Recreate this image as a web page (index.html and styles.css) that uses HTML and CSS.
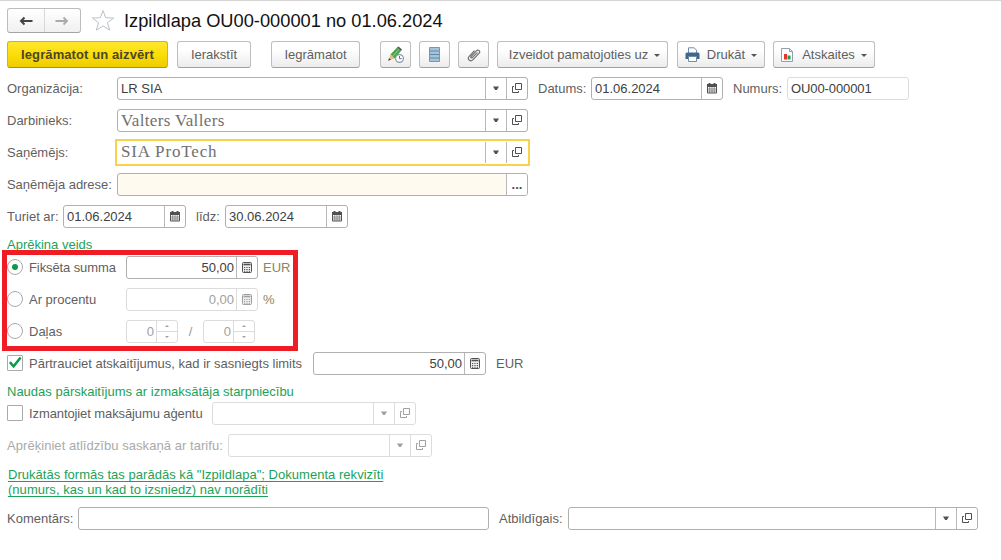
FILE: index.html
```
<!DOCTYPE html>
<html lang="lv">
<head>
    <meta charset="UTF-8">
    <meta name="viewport" content="width=device-width, initial-scale=1.0">
    <title>Izpildlapa OU00-000001</title>
    <link rel="stylesheet" href="styles.css">
</head>
<body>

<!-- Shared icons -->
<svg class="sprite" width="0" height="0">
    <symbol id="i-down" viewBox="0 0 20 21">
        <path d="M7 8.500h6l-2.200 3.500h-1.600z" fill="currentColor"/>
    </symbol>
    <symbol id="i-open" viewBox="0 0 20 21">
        <path d="M7 8.500H5.500v6h6v-1.500M8.500 5.500h6v6h-6z" fill="none" stroke="currentColor" stroke-width="1"/>
    </symbol>
    <symbol id="i-date" viewBox="0 0 20 21">
        <path d="M5.500 7h9v8h-9z" fill="#fff" stroke="currentColor"/>
        <path d="M5 6h10v3H5zM6.500 5h2v2h-2zM11.500 5h2v2h-2z" fill="currentColor"/>
        <path d="M5.500 11h9M5.500 13h9M7.800 9v6M10 9v6M12.200 9v6" stroke="currentColor" stroke-width=".6"/>
    </symbol>
    <symbol id="i-calc" viewBox="0 0 20 21">
        <rect x="5.500" y="5.500" width="9" height="10" rx="1" fill="#eee" stroke="currentColor"/>
        <path d="M6.500 7.500h7" stroke="currentColor" stroke-width="1.600"/>
        <path d="M7 10.500h6.500M7 12.500h6.500M7 14.300h6.500" stroke="currentColor" stroke-width="1" stroke-dasharray="1.200 1.200"/>
    </symbol>
</svg>

<div class="form">
    <div class="header">
        <div class="nav">
            <span><svg width="14" height="10" viewBox="0 0 14 10"><path d="M13.500 5H2M5.500 1.500 2 5l3.500 3.500" fill="none" stroke="#444" stroke-width="2"/></svg></span>
            <span><svg width="14" height="10" viewBox="0 0 14 10"><path d="M.5 5H12M8.500 1.500 12 5 8.500 8.500" fill="none" stroke="#aaa" stroke-width="1.800"/></svg></span>
        </div>
        <svg class="star" width="24" height="23" viewBox="0 0 24 23"><path d="M12 1.500l2.700 7.200 8 .3-6.300 4.700 2.300 7.500-6.700-4.300-6.700 4.300 2.300-7.500L1.300 9l8-.3z" fill="#fff" stroke="#bcc2c8"/></svg>
        <h1>Izpildlapa OU00-000001 no 01.06.2024</h1>
    </div>

    <div class="toolbar">
        <button class="btn primary">Iegrāmatot un aizvērt</button>
        <button class="btn save">Ierakstīt</button>
        <button class="btn post">Iegrāmatot</button>
        <button class="btn icon">
            <svg width="18" height="18" viewBox="0 0 18 18">
                <path d="M3.500 8.500 10 1.500l4 3.500-6.500 7.500z" fill="#43a548"/>
                <path d="M5.500 10.500 12 3.300" stroke="#7cc576" stroke-width="1.200"/>
                <path d="M10 1.500l1.500-1 3.500 3-1 1.500z" fill="#555"/>
                <path d="M3.500 8.500l4 4-6 2z" fill="#e6b98a"/>
                <path d="M2.200 12.300l1.700 1.500-2.900 1z" fill="#333"/>
                <circle cx="12.500" cy="12.500" r="3.900" fill="#fff" stroke="#8397a8" stroke-width="1.200"/>
                <path d="M12.500 10v2.700h2.200" fill="none" stroke="#60788c"/>
            </svg>
        </button>
        <button class="btn icon">
            <svg width="11" height="15" viewBox="0 0 11 15">
                <path d="M.5.500h10v14H.5z" fill="#a5c4da" stroke="#6f99b6"/>
                <path d="M1 4h9M1 7.500h9M1 11h9" stroke="#5f88a6"/>
            </svg>
        </button>
        <button class="btn icon">
            <svg width="14" height="14" viewBox="0 0 14 14">
                <path d="M10.500 4.300 5.300 9.700c-.9.900-2.100-.3-1.200-1.200l5.200-5.600c2-2 4.600.4 2.700 2.500l-6 6.300c-2.700 2.700-6.300-.6-3.800-3.400l5.300-5.700" fill="none" stroke="#707070" stroke-width="1.200"/>
            </svg>
        </button>
        <button class="btn create">Izveidot pamatojoties uz <i></i></button>
        <button class="btn print">
            <svg width="15" height="15" viewBox="0 0 15 15">
                <path d="M3.500 6V.8h5.700l2.300 2.400V6" fill="#fff" stroke="#6b8dab"/>
                <path d="M2 5.500h11q1.500 0 1.500 1.500v5h-14V7Q.5 5.500 2 5.500z" fill="#41668c"/>
                <path d="M3.500 9.500h8v5h-8z" fill="#fff" stroke="#6b8dab"/>
            </svg>
            Drukāt <i></i>
        </button>
        <button class="btn reports">
            <svg width="12" height="14" viewBox="0 0 12 14">
                <path d="M.5.500h8L11.500 3.500v10H.5z" fill="#fff" stroke="#8fa0ae"/>
                <path d="M8.500.500v3h3" fill="none" stroke="#8fa0ae"/>
                <path d="M3 6h3v5.500H3z" fill="#e5352c"/>
                <path d="M6.500 7.500h3v4h-3z" fill="#1fa049"/>
            </svg>
            Atskaites <i></i>
        </button>
    </div>

    <div class="row">
        <label class="main-label">Organizācija:</label>
        <div class="field wide">
            <span class="value">LR SIA</span>
            <svg><use href="#i-down"/></svg>
            <svg><use href="#i-open"/></svg>
        </div>
        <label class="date-label">Datums:</label>
        <div class="field doc-date">
            <span class="value">01.06.2024</span>
            <svg><use href="#i-date"/></svg>
        </div>
        <label class="number-label">Numurs:</label>
        <div class="field light doc-number"><span class="value">OU00-000001</span></div>
    </div>

    <div class="row">
        <label class="main-label">Darbinieks:</label>
        <div class="field wide">
            <span class="value serif">Valters Vallers</span>
            <svg><use href="#i-down"/></svg>
            <svg><use href="#i-open"/></svg>
        </div>
    </div>

    <div class="row">
        <label class="main-label">Saņēmējs:</label>
        <div class="field wide focused">
            <span class="value serif">SIA ProTech</span>
            <svg><use href="#i-down"/></svg>
            <svg><use href="#i-open"/></svg>
        </div>
    </div>

    <div class="row">
        <label class="main-label address">Saņēmēja adrese:</label>
        <div class="field wide required">
            <span class="value"></span>
            <b class="more">...</b>
        </div>
    </div>

    <div class="row">
        <label class="from-label">Turiet ar:</label>
        <div class="field period from">
            <span class="value">01.06.2024</span>
            <svg><use href="#i-date"/></svg>
        </div>
        <label class="to-label">līdz:</label>
        <div class="field period">
            <span class="value">30.06.2024</span>
            <svg><use href="#i-date"/></svg>
        </div>
    </div>

    <h2>Aprēķina veids</h2>

    <div class="methods">
        <div class="row">
            <span class="radio checked"></span>
            <label class="method-label fixed">Fiksēta summa</label>
            <div class="field amount">
                <span class="value">50,00</span>
                <svg><use href="#i-calc"/></svg>
            </div>
            <span class="unit">EUR</span>
        </div>
        <div class="row">
            <span class="radio"></span>
            <label class="method-label">Ar procentu</label>
            <div class="field amount light disabled">
                <span class="value">0,00</span>
                <svg><use href="#i-calc"/></svg>
            </div>
            <span class="unit">%</span>
        </div>
        <div class="row">
            <span class="radio"></span>
            <label class="method-label">Daļas</label>
            <div class="field part light disabled">
                <span class="value">0</span>
                <span class="spin"><i></i><i></i></span>
            </div>
            <span class="slash">/</span>
            <div class="field part light disabled">
                <span class="value">0</span>
                <span class="spin"><i></i><i></i></span>
            </div>
        </div>
        <div class="highlight"></div>
    </div>

    <div class="row">
        <span class="checkbox"><svg width="15" height="15" viewBox="0 0 15 15"><path d="M2 6l4 4.500L13.500 1" fill="none" stroke="#0a9a4a" stroke-width="2.600"/></svg></span>
        <label class="limit-label">Pārtrauciet atskaitījumus, kad ir sasniegts limits</label>
        <div class="field limit">
            <span class="value">50,00</span>
            <svg><use href="#i-calc"/></svg>
        </div>
        <span class="currency">EUR</span>
    </div>

    <h2 class="agent-title">Naudas pārskaitījums ar izmaksātāja starpniecību</h2>

    <div class="row">
        <span class="checkbox"></span>
        <label class="agent-label">Izmantojiet maksājumu aģentu</label>
        <div class="field agent light disabled">
            <span class="value"></span>
            <svg><use href="#i-down"/></svg>
            <svg><use href="#i-open"/></svg>
        </div>
    </div>

    <div class="row">
        <label class="tariff-label">Aprēķiniet atlīdzību saskaņā ar tarifu:</label>
        <div class="field agent light disabled">
            <span class="value"></span>
            <svg><use href="#i-down"/></svg>
            <svg><use href="#i-open"/></svg>
        </div>
    </div>

    <a class="print-info">Drukātās formās tas parādās kā "Izpildlapa"; Dokumenta rekvizīti<br>(numurs, kas un kad to izsniedz) nav norādīti</a>

    <div class="row">
        <label class="comment-label">Komentārs:</label>
        <div class="field comment"><span class="value"></span></div>
        <label class="responsible-label">Atbildīgais:</label>
        <div class="field responsible">
            <span class="value"></span>
            <svg><use href="#i-down"/></svg>
            <svg><use href="#i-open"/></svg>
        </div>
    </div>
</div>

</body>
</html>
```
FILE: styles.css
```
* {
    box-sizing: border-box;
}

body {
    margin: 0;
    background-color: #fff;
    color: #5f5f5f;
    font-family: "Liberation Sans", Arial, sans-serif;
    font-size: 13px;
}

.sprite {
    position: absolute;
}

.form {
    height: 560px;
    padding: 7px 7px 0;
    border-top: 1px solid #d4d4d4;
}

/* Header */
.header {
    display: flex;
    height: 25px;
    align-items: center;
}

.nav {
    display: flex;
    width: 74px;
    height: 25px;
    border: 1px solid #bcbcbc;
    border-bottom-color: #a4a4a4;
    border-radius: 3px;
    background: linear-gradient(#fff, #f0f0f0);
}

.nav span {
    flex: 1;
    display: flex;
    align-items: center;
    justify-content: center;
}

.nav span + span {
    border-left: 1px solid #d8d8d8;
}

.star {
    margin: 0 9px 0 10px;
}

h1 {
    margin: 0;
    color: #111;
    font-size: 18.25px;
    font-weight: normal;
    white-space: nowrap;
}

/* Toolbar */
.toolbar {
    display: flex;
    gap: 8px;
    margin: 8px 0 9px;
}

.btn {
    display: flex;
    align-items: center;
    justify-content: center;
    height: 27px;
    padding: 0;
    border: 1px solid #bebebe;
    border-bottom-color: #a0a0a0;
    border-radius: 3px;
    background: linear-gradient(#fff 30%, #ececec);
    color: #5f5f5f;
    font: 13px "Liberation Sans", Arial, sans-serif;
    white-space: nowrap;
}

.btn i {
    margin: 1px 0 0 6px;
    border: 3px solid transparent;
    border-top: 3px solid #555;
    border-bottom: 0;
}

.primary {
    width: 161px;
    border-color: #cbb32c;
    border-bottom-color: #a8921b;
    background: linear-gradient(#ffe72f, #fbdd07 50%, #edcd00);
    color: #4d4628;
    font-weight: bold;
    letter-spacing: 0.1px;
}

.save {
    width: 74px;
    margin-left: 1px;
}

.post {
    width: 89px;
    margin: 0 12px;
}

.icon {
    width: 31px;
}

.create {
    width: 171px;
    padding-left: 4px;
}

.print {
    width: 88px;
    margin-left: 1px;
}

.print svg {
    margin-right: 7px;
}

.reports {
    width: 102px;
}

.reports svg {
    margin-right: 9px;
}

/* Rows and fields */
.row {
    display: flex;
    align-items: center;
    height: 23px;
    margin-bottom: 9px;
}

label {
    flex: none;
    white-space: nowrap;
}

.main-label {
    width: 110px;
}

.address {
    letter-spacing: -0.05px;
}

.field {
    display: flex;
    flex: none;
    height: 23px;
    border: 1px solid #b0b0b0;
    border-radius: 3px;
    background-color: #fff;
    color: #404040;
}

.field .value {
    flex: 1;
    padding-left: 3px;
    line-height: 21px;
    white-space: nowrap;
}

.field svg,
.more {
    flex: none;
    width: 21px;
    height: 21px;
    border-left: 1px solid #b8b8b8;
    color: #505050;
}

.more {
    line-height: 22px;
    text-align: center;
}

.light,
.light svg {
    border-color: #dcdcdc;
}

.disabled,
.field.disabled svg {
    color: #a0a0a0;
}

.field.light svg {
    border-color: #dcdcdc;
}

.wide {
    width: 411px;
}

.field .serif {
    color: #707070;
    font: 17px/21px "Liberation Serif", "Times New Roman", serif;
    letter-spacing: 0.35px;
}

.focused {
    width: 415px;
    height: 27px;
    margin-left: -2px;
    padding: 1px;
    border: 2px solid #fad14b;
    border-radius: 0;
}

.focused .serif {
    line-height: 20px;
    letter-spacing: 0.85px;
}

.required {
    background-color: #fffaf0;
}

.required .more {
    background-color: #fff;
    border-radius: 0 2px 2px 0;
}

.date-label {
    width: 53px;
    margin-left: 10px;
}

.doc-date {
    width: 132px;
}

.number-label {
    width: 54px;
    margin-left: 10px;
}

.doc-number {
    width: 122px;
    letter-spacing: -0.1px;
}

.from-label {
    width: 56px;
}

.period {
    width: 123px;
}

.to-label {
    width: 29px;
    margin-left: 10px;
}

h2 {
    height: 28px;
    margin: -9px 0 0;
    color: #1ba257;
    font-size: 13px;
    font-weight: normal;
    line-height: 33px;
}

/* Calculation method */
.methods {
    position: relative;
}

.highlight {
    position: absolute;
    left: -5px;
    top: -6px;
    width: 296px;
    height: 101px;
    border: 5px solid #ee1c24;
}

.radio {
    flex: none;
    display: flex;
    align-items: center;
    justify-content: center;
    width: 16px;
    height: 16px;
    margin: 0 6px 1px 0;
    border: 1px solid #aaa;
    border-radius: 50%;
}

.radio.checked::after {
    content: "";
    width: 6px;
    height: 6px;
    border-radius: 50%;
    background-color: #0a9a4a;
}

.method-label {
    width: 97px;
}

.fixed {
    letter-spacing: -0.1px;
}

.amount {
    width: 132px;
}

.amount .value,
.limit .value,
.part .value {
    padding-right: 2px;
    text-align: right;
}

.unit {
    margin-left: 5px;
    color: #8f8360;
}

.part {
    width: 52px;
}

.spin {
    display: flex;
    flex-direction: column;
    width: 21px;
    border-left: 1px solid #dcdcdc;
}

.spin i {
    flex: 1;
    display: flex;
    align-items: center;
    justify-content: center;
}

.spin i + i {
    border-top: 1px solid #dcdcdc;
}

.spin i::after {
    content: "";
    border: 2px solid transparent;
    border-top: 0;
    border-bottom: 2px solid #a0a0a0;
}

.spin i + i::after {
    border-top: 2px solid #a0a0a0;
    border-bottom: 0;
}

.slash {
    width: 25px;
    color: #999;
    text-align: center;
}

/* Limit and payment agent */
.checkbox {
    flex: none;
    display: flex;
    width: 16px;
    height: 16px;
    margin: 0 6px 1px 0;
    border: 1px solid #aaa;
    border-radius: 1px;
}

.limit-label {
    width: 284px;
}

.limit {
    width: 173px;
}

.currency {
    margin-left: 10px;
}

.agent-title {
    height: 27px;
}

.agent-label {
    width: 183px;
    letter-spacing: -0.1px;
}

.tariff-label {
    width: 221px;
    color: #aaa;
    letter-spacing: 0.05px;
}

.agent {
    width: 204px;
}

.print-info {
    display: block;
    height: 31px;
    margin: 10px 0 9px 1px;
    color: #1ba257;
    line-height: 15px;
    letter-spacing: 0.03px;
    text-decoration: underline;
    text-decoration-skip-ink: none;
    text-underline-offset: 2px;
}

.comment-label {
    width: 71px;
}

.comment {
    width: 411px;
}

.responsible-label {
    width: 69px;
    margin-left: 10px;
}

.responsible {
    width: 410px;
}
```
